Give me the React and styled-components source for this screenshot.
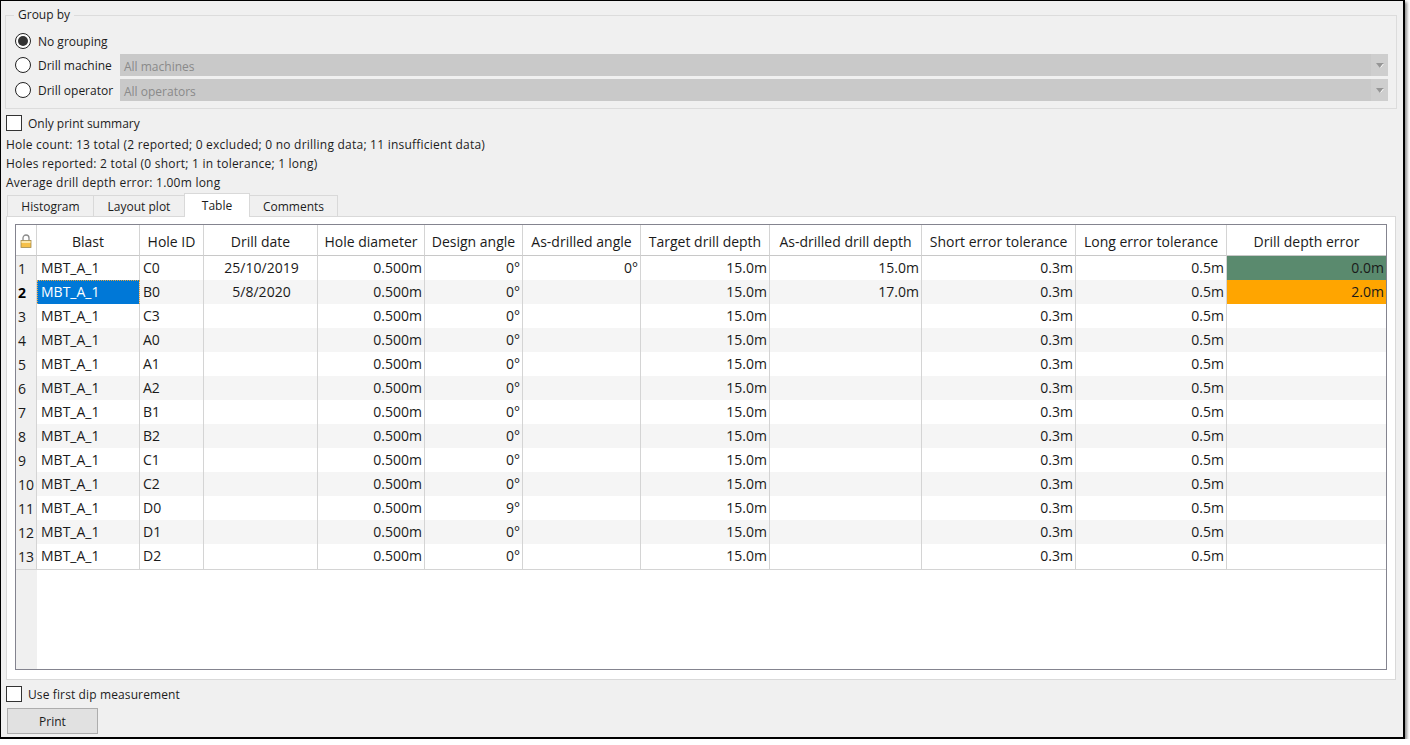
import styled, { createGlobalStyle } from 'styled-components';

const GlobalStyle = createGlobalStyle`
  html, body { margin: 0; padding: 0; background: #fff; }
  body { font-family: "Open Sans", "Noto Sans", sans-serif; font-size: 12px; color: #1c1c1c; }
`;

const Window = styled.div`
  width: 1405px;
  height: 739px;
  box-sizing: border-box;
  border: 1px solid #000;
  border-width: 1px 2px 2px 1px;
  background: #f0f0f0;
  box-shadow: 2px 2px 3px #8c8c8c;
  padding: 6px 6px 0 4px;
  display: flex;
  flex-direction: column;
`;

const GroupBox = styled.fieldset`
  margin: 0;
  padding: 6px 8px 7px 9px;
  height: 102px;
  box-sizing: border-box;
  border: 1px solid #dcdcdc;
  display: flex;
  flex-direction: column;
`;

const Legend = styled.legend`
  margin-left: -1px;
  padding: 0 4px;
  line-height: 16px;
`;

const RadioRow = styled.div`
  display: flex;
  align-items: center;
  height: ${p => p.$h}px;
`;

const RadioCircle = styled.span`
  width: 16px;
  height: 16px;
  box-sizing: border-box;
  flex: none;
  border-radius: 50%;
  border: 1px solid #222;
  background: #fff;
  display: flex;
  align-items: center;
  justify-content: center;
  margin-right: 7px;
  &::after {
    content: "";
    display: ${p => (p.$on ? 'block' : 'none')};
    width: 10px;
    height: 10px;
    border-radius: 50%;
    background: #333;
  }
`;

const RadioLabel = styled.span`
  white-space: nowrap;
  width: 82px;
  flex: none;
`;

const Combo = styled.div`
  flex: 1;
  height: 22px;
  background: #c9c9c9;
  color: #8a8a8a;
  display: flex;
  align-items: center;
  justify-content: space-between;
  padding-left: 4px;
`;

const ComboText = styled.span`
  padding-top: 2px;
`;

const ComboArrow = styled.span`
  width: 17px;
  height: 22px;
  display: flex;
  align-items: center;
  justify-content: center;
  background: #cecece;
`;

const CheckRow = styled.label`
  display: flex;
  align-items: center;
  height: 18px;
  margin: ${p => p.$m || 0};
  letter-spacing: ${p => p.$spread || 0}px;
`;

const CheckBox = styled.span`
  width: 16px;
  height: 16px;
  box-sizing: border-box;
  border: 1px solid #333;
  background: #fff;
  margin-right: 6px;
  flex: none;
`;

const Summary = styled.div`
  margin: 3px 0 0 1px;
  letter-spacing: 0.23px;
`;

const SummaryLine = styled.div`
  height: 19px;
  line-height: 19px;
  white-space: nowrap;
`;

const TabBar = styled.div`
  display: flex;
  align-items: flex-end;
  height: 24px;
  margin: 1px 0 0 2px;
`;

const Tab = styled.div`
  width: ${p => p.$w}px;
  box-sizing: border-box;
  height: ${p => (p.$active ? 24 : 22)}px;
  text-align: center;
  line-height: ${p => (p.$active ? 23 : 21)}px;
  background: ${p => (p.$active ? '#fff' : '#f0f0f0')};
  border: 1px solid #d9d9d9;
  border-bottom: ${p => (p.$active ? 'none' : '1px solid #d9d9d9')};
  margin-left: ${p => (p.$first ? 0 : -1)}px;
  position: relative;
  z-index: ${p => (p.$active ? 1 : 0)};
`;

const Pane = styled.div`
  width: 1390px;
  height: 464px;
  margin: -1px 0 0 1px;
  box-sizing: border-box;
  background: #fff;
  border: 1px solid #d9d9d9;
  padding: 7px 8px 9px 8px;
  flex: none;
`;

const TableFrame = styled.div`
  width: 1372px;
  height: 446px;
  box-sizing: border-box;
  border: 1px solid #84848f;
  display: flex;
  flex-direction: column;
  background: linear-gradient(to right, #f0f0f0 21px, #fff 21px);
  font-size: 14px;
`;

const COLS = '21px 103px 64px 114px 107px 98px 118px 129px 152px 154px 151px 159px';

const Row = styled.div`
  display: grid;
  grid-template-columns: ${COLS};
  height: ${p => p.$h || 24}px;
  flex: none;
  background: ${p => (p.$alt ? '#f5f5f5' : '#fff')};
`;

const HeaderCell = styled.div`
  box-sizing: border-box;
  border-right: ${p => (p.$last ? 'none' : '1px solid #d4d4d4')};
  border-bottom: 1px solid #c8c8c8;
  background: #fff;
  padding-top: 2px;
  display: flex;
  align-items: center;
  justify-content: center;
  white-space: nowrap;
  color: #1a1a1a;
`;

const RowHead = styled.div`
  box-sizing: border-box;
  background: #f0f0f0;
  border-right: 1px solid #d4d4d4;
  border-bottom: 1px solid #d4d4d4;
  padding-left: 2px;
  line-height: 25px;
  font-weight: ${p => (p.$current ? 700 : 400)};
  color: ${p => (p.$current ? '#000' : '#1a1a1a')};
`;

const Cell = styled.div`
  box-sizing: border-box;
  border-right: ${p => (p.$last ? 'none' : '1px solid #d4d4d4')};
  border-bottom: 1px solid #d4d4d4;
  padding: 0 2px 0 ${p => p.$pad || 4}px;
  line-height: 23px;
  white-space: nowrap;
  overflow: hidden;
  text-align: ${p => p.$align || 'left'};
  background: ${p => p.$bg || 'transparent'};
  color: ${p => (p.$selected ? '#fff' : '#1a1a1a')};
  ${p => p.$selected && 'outline: 1px dotted #e8a33c; outline-offset: -1px;'}
`;

const Footer = styled.div`
  margin-top: 5px;
  margin-left: 1px;
`;

const PrintButton = styled.button`
  display: block;
  width: 91px;
  height: 26px;
  margin: 5px 0 0 1px;
  padding: 0;
  font: inherit;
  color: #1c1c1c;
  background: #e1e1e1;
  border: 1px solid #adadad;
`;

const columns = ['Blast', 'Hole ID', 'Drill date', 'Hole diameter', 'Design angle', 'As-drilled angle', 'Target drill depth', 'As-drilled drill depth', 'Short error tolerance', 'Long error tolerance', 'Drill depth error'];

const holes = [
  { id: 'C0', date: '25/10/2019', angle: '0°', drilled: '0°', depth: '15.0m', error: '0.0m', color: '#5a8a6e' },
  { id: 'B0', date: '5/8/2020', angle: '0°', depth: '17.0m', error: '2.0m', color: '#ffa500' },
  { id: 'C3', angle: '0°' },
  { id: 'A0', angle: '0°' },
  { id: 'A1', angle: '0°' },
  { id: 'A2', angle: '0°' },
  { id: 'B1', angle: '0°' },
  { id: 'B2', angle: '0°' },
  { id: 'C1', angle: '0°' },
  { id: 'C2', angle: '0°' },
  { id: 'D0', angle: '9°' },
  { id: 'D1', angle: '0°' },
  { id: 'D2', angle: '0°' },
];

function LockIcon() {
  return (
    <svg width="12" height="14" viewBox="0 0 12 14">
      <path d="M3 7V4a3 3 0 0 1 6 0v3" fill="none" stroke="#8a8a8a" strokeWidth="1.3" />
      <rect x="1" y="6.5" width="10" height="7" fill="#f5c04a" stroke="#a08a50" strokeWidth="0.8" />
      <rect x="1.5" y="7" width="9" height="2" fill="#fbe6a8" />
    </svg>
  );
}

function ArrowIcon() {
  return (
    <svg width="8" height="5" viewBox="0 0 8 5">
      <path d="M0 0h8L4 5z" fill="#969696" />
      <path d="M7.5 0.8L4.5 4.5" stroke="#fff" strokeWidth="1" />
    </svg>
  );
}

export default function App() {
  return (
    <Window>
      <GlobalStyle />
      <GroupBox>
        <Legend>Group by</Legend>
        <RadioRow $h={24}>
          <RadioCircle $on />
          <span>No grouping</span>
        </RadioRow>
        <RadioRow $h={24}>
          <RadioCircle />
          <RadioLabel>Drill machine</RadioLabel>
          <Combo><ComboText>All machines</ComboText><ComboArrow><ArrowIcon /></ComboArrow></Combo>
        </RadioRow>
        <RadioRow $h={26}>
          <RadioCircle />
          <RadioLabel>Drill operator</RadioLabel>
          <Combo><ComboText>All operators</ComboText><ComboArrow><ArrowIcon /></ComboArrow></Combo>
        </RadioRow>
      </GroupBox>
      <CheckRow $m="5px 0 0 1px">
        <CheckBox />
        Only print summary
      </CheckRow>
      <Summary>
        <SummaryLine>Hole count: 13 total (2 reported; 0 excluded; 0 no drilling data; 11 insufficient data)</SummaryLine>
        <SummaryLine>Holes reported: 2 total (0 short; 1 in tolerance; 1 long)</SummaryLine>
        <SummaryLine>Average drill depth error: 1.00m long</SummaryLine>
      </Summary>
      <TabBar>
        <Tab $first $w={87}>Histogram</Tab>
        <Tab $w={92}>Layout plot</Tab>
        <Tab $active $w={66}>Table</Tab>
        <Tab $w={89}>Comments</Tab>
      </TabBar>
      <Pane>
        <TableFrame>
          <Row $h={31}>
            <HeaderCell><LockIcon /></HeaderCell>
            {columns.map((c, i) => (
              <HeaderCell key={c} $last={i === columns.length - 1}>{c}</HeaderCell>
            ))}
          </Row>
          {holes.map((h, i) => (
            <Row key={h.id} $alt={i % 2 === 1}>
              <RowHead $current={i === 1}>{i + 1}</RowHead>
              <Cell $selected={i === 1} $bg={i === 1 ? '#0078d7' : undefined}>MBT_A_1</Cell>
              <Cell $pad={3}>{h.id}</Cell>
              <Cell $align="center">{h.date}</Cell>
              <Cell $align="right">0.500m</Cell>
              <Cell $align="right">{h.angle}</Cell>
              <Cell $align="right">{h.drilled}</Cell>
              <Cell $align="right">15.0m</Cell>
              <Cell $align="right">{h.depth}</Cell>
              <Cell $align="right">0.3m</Cell>
              <Cell $align="right">0.5m</Cell>
              <Cell $last $align="right" $bg={h.color}>{h.error}</Cell>
            </Row>
          ))}
        </TableFrame>
      </Pane>
      <Footer>
        <CheckRow $spread={0.12}>
          <CheckBox />
          Use first dip measurement
        </CheckRow>
        <PrintButton>Print</PrintButton>
      </Footer>
    </Window>
  );
}
